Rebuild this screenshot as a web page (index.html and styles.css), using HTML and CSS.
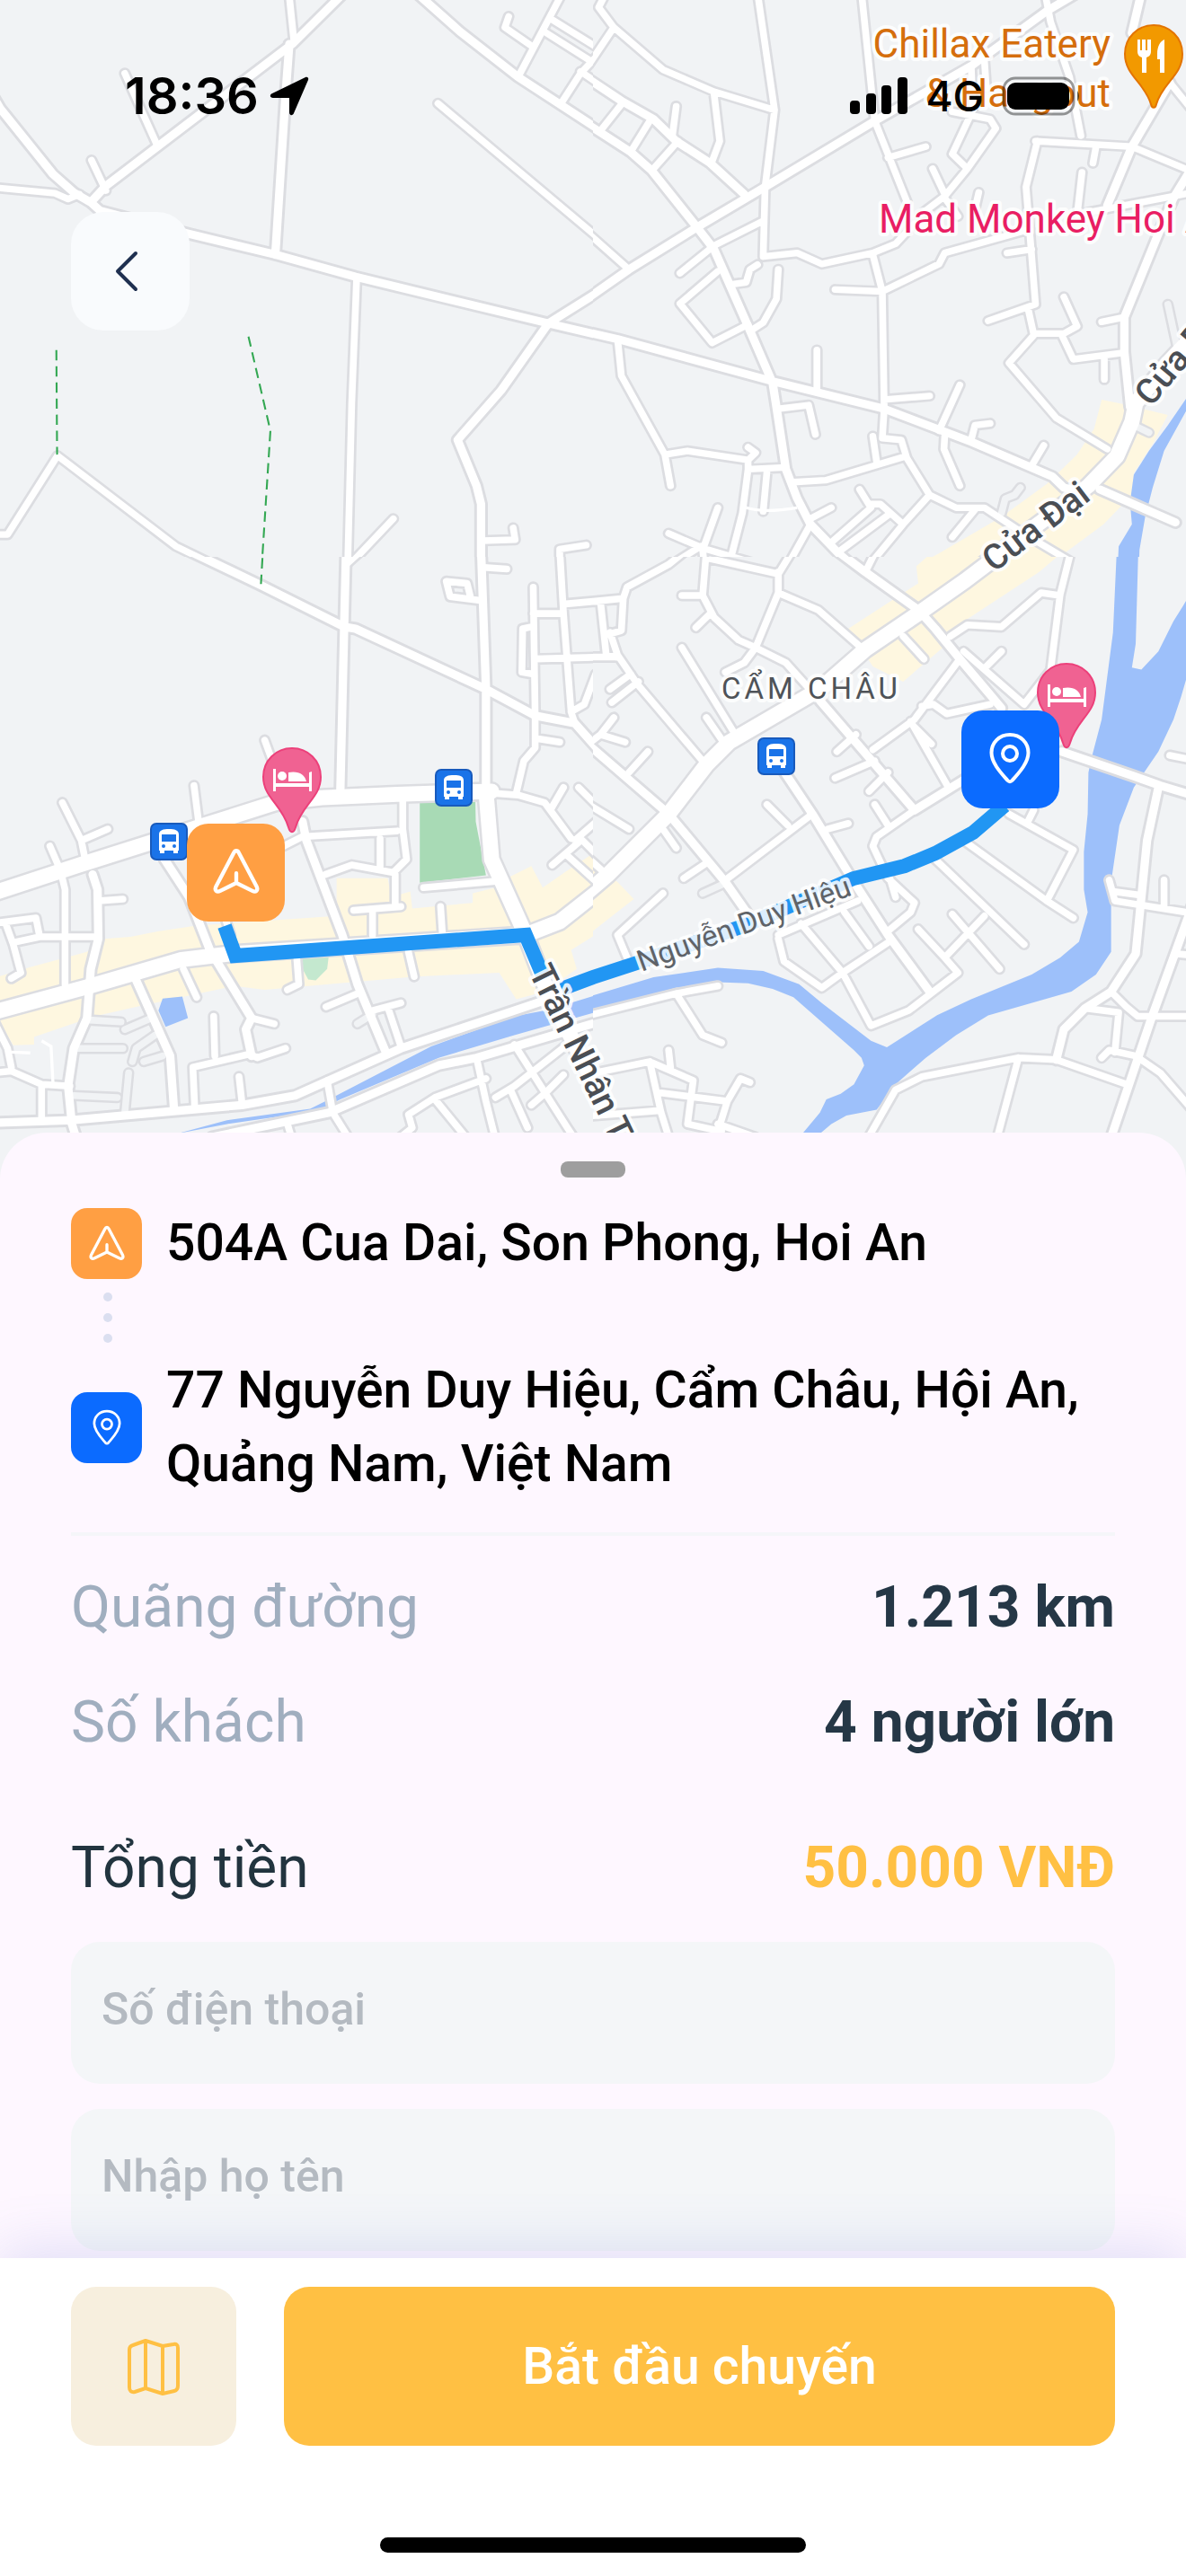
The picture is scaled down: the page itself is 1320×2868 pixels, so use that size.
FILE: index.html
```html
<!DOCTYPE html>
<html lang="vi">
<head>
  <meta charset="UTF-8">
  <meta name="viewport" content="width=device-width, initial-scale=1.0">
  <title>Chuyến đi</title>
  <link rel="stylesheet" href="styles.css">
</head>

<body>
  <!-- Shared icons and road geometry -->
  <svg class="defs" aria-hidden="true">
    <defs>
      <symbol id="icon-arrow" viewBox="0 0 48 48">
        <path class="line" d="M24 3c-1.200 0-2 .8-2.600 2L3 40c-1.600 3.600 1 6 4.500 4.200L24 36l16.500 8.200C44 46 46.600 43.600 45 40L26.600 5C26 3.800 25.200 3 24 3zM24 36V26" />
      </symbol>
      <symbol id="icon-pin" viewBox="0 0 48 58">
        <path class="line" d="M24 3C12 3 3.500 12 3.500 23c0 12 12 24 18 31 1.500 1.600 3.500 1.600 5 0 6-7 18-19 18-31C44.500 12 36 3 24 3z" />
        <circle class="line" cx="24" cy="24" r="8" />
      </symbol>
      <symbol id="bus-stop" viewBox="0 0 42 42">
        <rect x="1" y="1" width="40" height="40" rx="6" fill="#1a73e8" stroke="#185abc" stroke-width="2" />
        <path d="M10 31V13c0-5 5-6 11-6s11 1 11 6v18h-1v3h-5v-3H16v3h-5v-3z" fill="#fff" />
        <path d="M13 13h16v8H13z" fill="#1a73e8" />
        <circle cx="15" cy="26" r="2" fill="#1a73e8" />
        <circle cx="27" cy="26" r="2" fill="#1a73e8" />
      </symbol>
      <symbol id="hotel" viewBox="0 0 68 98">
        <path d="M34 2C16 2 2 16 2 34c0 23 21 31 28 56 2 7 6 7 8 0 7-25 28-33 28-56C66 16 52 2 34 2z" fill="#f06292" stroke="#ec407a" stroke-width="2" />
        <path d="M13 25h3v16h37V29l3-1v22h-3v-5H16v5h-3z" fill="#fff" />
        <path d="M30 39V29c11-2 18 2 20 10z" fill="#fff" />
        <circle cx="23" cy="33" r="5" fill="#fff" />
      </symbol>

      <path id="nw-mid" d="M905 -15L775 118L280 507L240 552M-20 260L0 295L140 475L195 525L240 552L265 575L500 638L730 695L940 755L1450 882L1600 918M1095 -25L1215 85L1370 210L1600 365M765 120L755 260L728 695M1450 882L1325 1065L1210 1200L1260 1325L1272 1375L1272 1600M1450 882L1600 785" />
      <path id="nw-minor" d="M765 -10L777 110M330 200L415 395M242 437L280 520M-10 512L145 527L180 543L210 530M1158 282L1600 665M943 760L930 1100L918 1600M-20 1458L20 1458L152 1243L465 1490L620 1568L700 1605M1040 1415L925 1540M1275 1475L1362 1472L1357 1440M1275 1548L1338 1552M1550 1487L1480 1498L1480 1600M1485 -15L1370 210M1345 45L1335 75L1405 125M1462 55L1600 143M1445 90L1560 165M1590 140L1535 200L1485 280M1535 195L1600 240" />

      <path id="ne-major" d="M1620 880L1520 990L1435 1100L1425 1150L1385 1245L1310 1325L1200 1412L1060 1519L960 1595" />
      <path id="ne-mid" d="M-20 818L95 735L275 620L455 510L745 330L1000 180L1200 30L1290 -25M-20 210L75 275L160 325L220 385L310 445L400 530M-20 335L100 415L155 465L275 620L320 680L410 890L475 1045L485 1110L510 1280L540 1360L575 1430L650 1510L740 1590M-20 905L65 925L475 1040L770 1115L1000 1205L1215 1300L1245 1330L1300 1345M1600 430L1535 540L1490 650L1405 865L1405 960L1420 1110M1340 1335L1540 1425M1450 -20L1425 90M1525 225L1425 400L1360 560" />
      <path id="ne-minor" d="M30 -10L15 20L55 75L185 190L320 250L480 300M55 75L-20 190M435 -20L480 300L455 510L450 700L540 690L605 720L740 690L800 665L850 610M320 255L335 385L315 440M220 290L210 370M75 285L25 350M150 330L105 405M225 385L160 460M710 -20L745 330L830 550M780 430L880 400M1000 310L950 420L990 460L1065 350L1050 325L950 305M990 460L930 535L860 590M898 460L930 530M930 540L965 590M1020 525L1010 570M1195 -20L1210 60L1260 210L1290 370M1000 180L1005 300M1035 165L1040 240M1525 225L1600 320M1170 385L1425 400L1600 475M1175 385L1145 510L1160 700L1170 830L1045 875M1330 400L1322 445M1293 470L1282 570M1280 585L1600 522M1155 625L930 690L915 720L765 795L640 790M740 695L765 795L770 1115L765 1195L815 1200L830 1250L890 1350L960 1385L1035 1385L1130 1450L1260 1530L1250 1590M1160 680L1095 690M1150 840L1165 910L1245 910L1280 890L1245 810M1165 915L1100 990L1225 1140L1360 1225M1240 915L1270 980L1405 962M1352 975L1352 1035M1405 865L1345 878M445 605L320 670L230 745M330 740L230 828L315 935L410 885M370 775L405 770L415 735L435 722M490 735L485 815L450 880L420 900M592 955L592 1060M490 1115L570 1105L588 1185M770 1090L890 1080M970 1050L915 1175M1050 1155L1010 1160L1000 1200M930 1190L928 1225L970 1325M1192 1215L1160 1270M740 1190L750 1260M825 1245L615 1310L530 1315M65 925L75 1025L190 1240L205 1325M190 1240L250 1230L410 1255L430 1235L410 1220M410 1255L410 1280L510 1275M410 1280L395 1400L365 1520M460 1285L450 1395M575 1415L630 1385M575 1430L505 1560M330 1385L290 1500L300 1600M200 1455L290 1495L505 1560M285 1490L130 1590M705 1335L735 1385L630 1480M735 1375L760 1375L820 1430M780 1405L650 1505M890 1350L820 1430L700 1580M1010 1390L950 1465M95 735L-20 630" />
      <path id="ne-alley" d="M1080 1400L1090 1360L1115 1350L1130 1330M1520 830L1545 950M1440 1165L1470 1180" />

      <path id="sw-major" d="M-20 890L210 815L400 755L540 710L730 650L850 637L1050 628L1300 620M-20 1205L240 1135L480 1065L610 1050L1390 1000L1480 965L1600 870M1285 620L1300 800L1390 1000L1440 1130L1600 1450" />
      <path id="sw-mid" d="M1272 -20L1285 350L1285 620M470 -30L690 75L910 185L940 190L1285 350L1415 420L1520 440L1600 530M915 -20L910 185L900 615M-20 1497L190 1490L640 1450L780 1425L1060 1300L1300 1220L1450 1170M560 1535L870 1470L1160 1345L1260 1325L1600 1225M800 700L810 750L905 1000L945 1130L1020 1310M435 800L500 900L555 1040L665 1220L650 1250L665 1320M360 1120L450 1320L460 1460M245 840L258 880L260 1010L240 1090L230 1220L195 1300L180 1400L190 1500L215 1580" />
      <path id="sw-minor" d="M915 20L965 -25M750 765L800 740L1050 725M700 485L720 540M165 650L215 750L225 800M215 750L285 720M132 765L160 830L172 880L172 1130M513 605L525 700M260 910L325 905M-20 970L95 955L105 1005L260 1005M15 970L35 1025L55 1100L30 1115M35 1020L105 1005M665 1220L725 1235M485 1090L520 1165M785 1065L790 1130L760 1145M595 955L610 1000M565 1215L568 1320M755 1300L680 1325L660 1315L510 1350L515 1460M632 1375L640 1445M862 1190L945 1155M985 1200L1060 1180M1025 1190L1060 1295M1065 640L1065 720L1075 800L1040 835L930 815L860 840M1005 745L1005 820M1045 840L1045 925M935 935L1060 925M985 935L985 1000M1165 925L1170 1000M1080 1045L1095 1110M1120 875L1310 858M1300 625L1370 630L1440 650L1510 745L1540 750L1600 810M1490 610L1455 670M1530 610L1600 680M1520 750L1600 680M1530 755L1460 815M1500 790L1600 880M1365 625L1385 540L1415 505L1415 420L1410 80M1415 480L1480 490M1410 310L1380 305L1382 190L1405 185M1410 150L1480 150M1415 270L1600 265M1480 -20L1490 150L1510 410L1520 440M1490 125L1600 115M1510 410L1545 390L1575 310M1340 32L1280 28M1270 115L1190 105L1180 65L1235 70L1245 110M-20 1220L20 1300L30 1350M-20 1365L30 1360L110 1395L185 1400M110 1395L110 1490M1260 1325L1285 1440L1320 1580M1360 1290L1500 1510L1540 1570M1310 1430L1360 1400L1500 1290M1285 1380L1150 1430L1080 1475L1090 1510L1040 1550M1150 1435L1240 1545M1350 1410L1395 1510M1440 1420L1490 1370M1405 1450L1440 1420M865 1385L880 1470L930 1550M760 1500L775 1550" />
      <path id="sw-alley" d="M235 1225L320 1230M205 1300L325 1300M195 1425L310 1430M340 1365L330 1470M330 1250L400 1220M350 1335L360 1300L410 1265M380 1335L430 1320M945 1235L985 1210" />

      <path id="se-major" d="M1100 -25L985 62L860 150L720 245L600 350L360 490L300 550L200 680L40 840L-30 900" />
      <path id="se-mid" d="M640 -20L720 40L860 140L905 190L970 270L1080 400M1240 515L1430 580L1500 605L1600 635M-20 490L200 680L350 860L420 960M500 560L580 680L690 860L780 1000L890 1150M1600 880L1475 1225L1365 1550M1495 610L1465 750L1435 1050L1370 1150L1300 1195L1245 1250L1225 1330M600 380L850 670L980 590" />
      <path id="se-minor" d="M-20 120L80 110L90 80L200 20L250 -20M80 110L75 195L40 205M20 120L35 260L60 265M45 200L65 260L120 340L290 540M-20 265L60 265M120 330L50 385M100 310L45 350M235 102L290 102L300 -20M290 102L320 160L385 220L430 240L510 280L600 380M310 150L272 187M310 5L490 45L530 -20M490 40L490 95L430 240L400 280L350 305M490 95L595 140L715 245M235 240L370 460M300 425L345 490M720 40L750 -20M820 210L875 270M970 270L850 430L740 510M695 470L645 515M745 540L640 585M780 570L730 620M840 435L940 610M850 450L895 495M870 395L900 390L935 415L1050 390M980 250L1140 390L1210 300L1235 100L1260 0L1255 -20M945 210L990 180L1080 185L1185 95L1235 102M1080 250L1035 295M55 425L20 470L85 490M20 470L-20 500M145 515L95 570M-20 650L95 720M-20 790L30 835M185 720L220 770M300 810L240 850M350 855L580 680M460 655L515 710M675 705L620 720M850 670L750 740L740 765L780 850L850 915L840 940L780 990M785 850L800 900M745 655L780 710M185 890L65 1000L90 1060M490 1000L700 910M490 1010L505 1070L605 1140L660 1100L780 1020M550 970L660 1100L735 1240L835 1200L965 1100L930 1060L860 985M665 940L730 1030M930 1060L1035 950M950 945L1075 1090M905 800L1140 1025M980 750L1200 910L1270 955M1100 680L1270 775L1200 910M1150 700L1165 670M1545 1050L1600 1055M1600 945L1380 910L1365 855M1375 885L1450 895M1510 855L1510 930M1370 1150L1410 1190L1440 1215L1600 1215M1310 1195L1390 1205L1380 1310M1345 1325L1365 1305L1435 1320L1500 1365L1600 1480M720 1550L800 1410L870 1375L1125 1325L1225 1330L1410 1395M1125 1325L1065 1550M1525 525L1600 540M-20 1215L220 1155L330 1135M220 1155L290 1265L340 1285M-20 1370L150 1335L265 1385L250 1500L340 1520M200 1305L205 1350M150 1335L180 1470L205 1550M-20 1480L170 1465M180 1418L355 1440L330 1520M355 1440L390 1380L415 1390M330 1500L430 1535" />
      <path id="se-alley" d="M345 865L290 890" />
    </defs>
  </svg>

  <header class="stage">
    <svg class="map" viewBox="0 0 1320 1320" role="img" aria-label="Bản đồ Hội An">
      <!-- North west tile -->
      <svg x="0" y="0" width="660" height="620" viewBox="0 0 1568 1519" preserveAspectRatio="none">
        <use href="#nw-minor" class="casing minor" />
        <use href="#nw-mid" class="casing mid" />
        <use href="#nw-minor" class="road minor" />
        <use href="#nw-mid" class="road mid" />
        <path class="trail" d="M149 955L151 1240M657 918L715 1175L693 1530" />
      </svg>

      <!-- North east tile -->
      <svg x="660" y="0" width="660" height="620" viewBox="0 0 1568 1519" preserveAspectRatio="none">
        <path class="shops" d="M1345 1090L1400 1102L1520 1132L1480 1210L1430 1290L1425 1350L1350 1430L1180 1560L850 1560L860 1540L910 1512L1080 1410L1200 1320L1280 1240L1325 1170z" />
        <path class="water" d="M1590 1055L1520 1160L1470 1230L1430 1295L1420 1370L1425 1430L1390 1490L1385 1600L1442 1600L1445 1500L1460 1410L1480 1330L1510 1230L1590 1080z" />
        <use href="#ne-alley" class="casing alley" />
        <use href="#ne-minor" class="casing minor" />
        <use href="#ne-mid" class="casing mid" />
        <use href="#ne-major" class="casing major" />
        <use href="#ne-alley" class="ground alley" />
        <use href="#ne-minor" class="road minor" />
        <use href="#ne-mid" class="road mid" />
        <use href="#ne-major" class="road major" />
        <path class="footway" d="M405 1385Q450 1400 540 1385" />
      </svg>

      <!-- South west tile -->
      <svg x="0" y="620" width="660" height="660" viewBox="0 0 1568 1568" preserveAspectRatio="none">
        <path class="shops" d="M-20 1115L80 1085L230 1045L275 1010L345 1005L420 990L520 975L890 950L890 850L1025 850L1035 900L1085 885L1090 930L1250 915L1250 890L1310 875L1350 845L1405 818L1435 875L1500 830L1590 770L1590 990L1510 1040L1525 1090L1440 1150L1365 1170L1320 1100L1100 1110L700 1145L620 1135L360 1190L250 1215L90 1270L90 1290L35 1292L-20 1200z" />
        <path class="park" d="M1110 650L1257 648L1258 700L1285 842L1110 862z" />
        <path class="garden" d="M797 1050L870 1050L865 1090L835 1120L815 1118L800 1090z" />
        <path class="water" d="M430 1168L482 1163L497 1220L438 1243L419 1200zM470 1525L600 1490L820 1460L870 1435L1140 1295L1360 1215L1450 1198L1590 1155L1590 1200L1360 1265L1160 1325L900 1435L840 1465L600 1500z" />
        <use href="#sw-alley" class="casing alley" />
        <use href="#sw-minor" class="casing minor" />
        <use href="#sw-mid" class="casing mid" />
        <use href="#sw-major" class="casing major" />
        <use href="#sw-alley" class="ground alley" />
        <use href="#sw-minor" class="road minor" />
        <use href="#sw-mid" class="road mid" />
        <use href="#sw-major" class="road major" />
        <path class="footway" d="M110 1280L135 1295L140 1390M30 1310L80 1312" />
        <path class="trail" d="M694 3L690 72" />
      </svg>

      <!-- South east tile -->
      <svg x="660" y="620" width="660" height="660" viewBox="0 0 1568 1568" preserveAspectRatio="none">
        <path class="shops" d="M855 25L905 -20L1250 -20L1180 40L940 197L925 240L820 330L740 290L675 190L860 70zM-20 830L10 825L65 860L108 905L-20 1005z" />
        <path class="water" d="M1385 -20L1375 200L1345 430L1320 525L1310 570L1308 680L1298 780L1298 880L1308 940L1285 1018L1235 1060L1160 1105L1000 1170L910 1212L777 1297L735 1280L605 1180L545 1130L450 1095L330 1087L160 1112L0 1160L-20 1165L-20 1205L0 1200L220 1140L330 1125L410 1128L475 1143L530 1165L690 1305L710 1325L717 1345L690 1395L655 1420L617 1435L600 1470L550 1530L595 1530L630 1500L670 1478L750 1462L800 1395L880 1325L960 1265L1045 1213L1265 1150L1330 1105L1370 1045L1370 860L1392 710L1430 610L1495 515L1535 430L1555 370L1590 250L1590 80L1560 130L1535 170L1495 250L1450 298L1425 293L1435 230L1442 -20z" />
        <use href="#se-alley" class="casing alley" />
        <use href="#se-minor" class="casing minor" />
        <use href="#se-mid" class="casing mid" />
        <use href="#se-major" class="casing major" />
        <use href="#se-alley" class="ground alley" />
        <use href="#se-minor" class="road minor" />
        <use href="#se-mid" class="road mid" />
        <use href="#se-major" class="road major" />
      </svg>

      <!-- Trip route -->
      <path class="route" d="M250 1031L262 1064L585 1041L605 1088M625 1101L660 1088L706 1073L830 1030L950 978L1007 964L1041 950L1083 927L1118 897" />

      <!-- Place names -->
      <text class="place street" transform="translate(1106 638) rotate(-37)">Cửa Đại</text>
      <text class="place street" transform="translate(1281 454) rotate(-50)">Cửa Đại</text>
      <text class="place street" transform="translate(588 1082) rotate(64)">Trần Nhân Tông</text>
      <text class="place lane" transform="translate(714 1082) rotate(-20)">Nguyễn Duy Hiệu</text>
      <text class="place ward" x="803" y="778">CẨM CHÂU</text>
      <text class="place food" x="1236" y="64">Chillax Eatery</text>
      <text class="place food" x="1236" y="119">&amp; Hangout</text>
      <text class="place stay" x="978" y="259">Mad Monkey Hoi An</text>

      <!-- Points of interest -->
      <path d="M1284 28c-18 0-32 14-32 32 0 24 22 32 29 56 1 5 5 5 6 0 7-24 29-32 29-56 0-18-14-32-32-32z" fill="#f29900" stroke="#e37400" stroke-width="2" />
      <path d="M1266 44h3v12h2V44h4v12h2V44h4v13c0 4-2 6-5 7v17h-5V64c-3-1-5-3-5-7zM1296 44c-5 2-8 8-8 16v6h3v15h5z" fill="#fff" />
      <use href="#hotel" x="291" y="831" width="68" height="98" />
      <use href="#hotel" x="1153" y="737" width="68" height="98" />
      <use href="#bus-stop" x="167" y="916" width="42" height="42" />
      <use href="#bus-stop" x="484" y="856" width="42" height="42" />
      <use href="#bus-stop" x="843" y="821" width="42" height="42" />

      <!-- Start and end markers -->
      <rect x="208" y="917" width="109" height="109" rx="24" fill="#ff9f43" />
      <use href="#icon-arrow" x="237" y="944" width="52" height="52" />
      <rect x="1070" y="791" width="109" height="109" rx="24" fill="#0b6bff" />
      <use href="#icon-pin" x="1100" y="815" width="48" height="58" />
    </svg>

    <div class="overlay">
      <div class="status-bar">
        <div class="status-group">
          <span class="clock">18:36</span>
          <svg class="gps" viewBox="0 0 44 44" aria-hidden="true">
            <path d="M40 1c2-1 4 1 3 3L27 41c-1 3-5 3-5-1V24H4c-4 0-4-4-1-5z" />
          </svg>
        </div>
        <div class="status-group">
          <svg class="signal" viewBox="0 0 64 42" aria-hidden="true">
            <rect x="0" y="26" width="11" height="15" rx="4" />
            <rect x="18" y="18" width="11" height="23" rx="4" />
            <rect x="35" y="9" width="11" height="32" rx="4" />
            <rect x="53" y="0" width="11" height="41" rx="4" />
          </svg>
          <span class="network">4G</span>
          <svg class="battery" viewBox="0 0 88 44" aria-hidden="true">
            <rect x="2" y="2" width="78" height="40" rx="13" fill="none" stroke="#000" stroke-opacity=".4" stroke-width="3" />
            <rect x="6" y="7" width="69" height="30" rx="9" />
            <path d="M84 16q4 6 0 12z" fill-opacity=".6" />
          </svg>
        </div>
      </div>
      <button class="back" type="button" aria-label="Quay lại">
        <svg viewBox="0 0 26 46" aria-hidden="true"><path d="M23 3L3 23l20 20" /></svg>
      </button>
    </div>
  </header>

  <main class="sheet">
    <div class="handle"></div>

    <!-- Pickup and drop-off -->
    <div class="stops">
      <div class="stop">
        <span class="stop-icon pickup"><svg aria-hidden="true"><use href="#icon-arrow" /></svg></span>
        <p>504A Cua Dai, Son Phong, Hoi An</p>
      </div>
      <div class="dots"><i></i><i></i><i></i></div>
      <div class="stop">
        <span class="stop-icon dropoff"><svg aria-hidden="true"><use href="#icon-pin" /></svg></span>
        <p>77 Nguyễn Duy Hiệu, Cẩm Châu, Hội An, Quảng Nam, Việt Nam</p>
      </div>
    </div>

    <!-- Trip summary -->
    <dl class="summary">
      <div class="row">
        <dt>Quãng đường</dt>
        <dd>1.213 km</dd>
      </div>
      <div class="row">
        <dt>Số khách</dt>
        <dd>4 người lớn</dd>
      </div>
      <div class="row total">
        <dt>Tổng tiền</dt>
        <dd>50.000 VNĐ</dd>
      </div>
    </dl>

    <form class="contact" id="tripForm">
      <input type="tel" name="phone" placeholder="Số điện thoại" aria-label="Số điện thoại">
      <input type="text" name="name" placeholder="Nhập họ tên" aria-label="Nhập họ tên">
    </form>
  </main>

  <footer class="actions">
    <div class="buttons">
      <button class="map-button" type="button" aria-label="Bản đồ">
        <svg viewBox="0 0 60 64" aria-hidden="true">
          <path d="M3 13q0-4 4-5L21 3l19 6 12-2q5-1 5 4v42q0 5-4 6l-13 3-19-6-12 4q-6 1-6-5zM21 3v53M40 9v53" />
        </svg>
      </button>
      <button class="start-button" type="submit" form="tripForm">Bắt đầu chuyến</button>
    </div>
    <div class="home-indicator"></div>
  </footer>
</body>
</html>
```
FILE: styles.css
```css
* {
  box-sizing: border-box;
}

body {
  font-family: Roboto, 'Noto Sans', sans-serif;
  margin: 0;
  min-height: 100vh;
  display: flex;
  flex-direction: column;
  background-color: #fef7ff;
}

button,
input {
  font-family: inherit;
  border: none;
}

.defs {
  position: absolute;
  width: 0;
  height: 0;
}

.line {
  fill: none;
  stroke: white;
  stroke-width: 4;
  stroke-linecap: round;
  stroke-linejoin: round;
}

/* Map */
.stage {
  display: grid;
  background-color: #f1f3f5;
}

.stage > * {
  grid-area: 1 / 1;
}

.map {
  display: block;
  width: 100%;
}

.casing,
.road,
.ground {
  fill: none;
  stroke-linecap: round;
  stroke-linejoin: round;
}

.casing {
  stroke: #dcdde1;
}

.road {
  stroke: white;
}

.ground {
  stroke: #f1f3f5;
}

.casing.minor {
  stroke-width: 31;
}

.casing.mid {
  stroke-width: 36;
}

.casing.major {
  stroke-width: 52;
}

.casing.alley {
  stroke-width: 30;
}

.road.minor {
  stroke-width: 18;
}

.road.mid {
  stroke-width: 22;
}

.road.major {
  stroke-width: 40;
}

.ground.alley {
  stroke-width: 18;
}

.footway {
  fill: none;
  stroke: white;
  stroke-width: 8;
}

.trail {
  fill: none;
  stroke: #34a853;
  stroke-width: 5;
  stroke-dasharray: 28 16;
}

.shops {
  fill: #fef7e0;
}

.park {
  fill: #a8dab5;
}

.garden {
  fill: #c4e8cf;
}

.water {
  fill: #9dc0fa;
}

.route {
  fill: none;
  stroke: #2196f3;
  stroke-width: 16;
}

.place {
  paint-order: stroke;
  stroke: rgba(255, 255, 255, 0.85);
  stroke-width: 8px;
  stroke-linejoin: round;
}

.street {
  font-size: 39px;
  font-weight: 500;
  fill: #4a4e54;
}

.lane {
  font-size: 33px;
  fill: #5f6368;
}

.ward {
  font-size: 33px;
  letter-spacing: 4px;
  fill: #4f5358;
}

.food {
  font-size: 44px;
  text-anchor: end;
  fill: #d56e0c;
}

.stay {
  font-size: 44px;
  fill: #e91e63;
}

/* Status bar and back button */
.overlay {
  padding: 78px 117px 0 79px;
}

.status-bar {
  display: flex;
  justify-content: space-between;
  align-items: center;
  height: 58px;
  padding-left: 60px;
  font-family: Inter, sans-serif;
}

.status-group {
  display: flex;
  align-items: center;
}

.clock {
  font-size: 56px;
  font-weight: 600;
}

.gps {
  width: 44px;
  height: 44px;
  margin-left: 12px;
}

.signal {
  width: 64px;
  height: 42px;
}

.network {
  font-size: 46px;
  font-weight: 500;
  margin: 0 20px;
}

.battery {
  width: 88px;
  height: 44px;
}

.back {
  width: 132px;
  height: 132px;
  margin-top: 100px;
  padding: 0;
  display: flex;
  justify-content: center;
  align-items: center;
  border-radius: 36px;
  background-color: #f9fbfd;
  cursor: pointer;
}

.back svg {
  width: 26px;
  height: 46px;
  margin-right: 8px;
  fill: none;
  stroke: #1f3050;
  stroke-width: 4;
  stroke-linecap: round;
  stroke-linejoin: round;
}

/* Bottom sheet */
.sheet {
  flex: 1;
  margin-top: -59px;
  padding: 32px 79px 6px;
  border-radius: 52px 52px 0 0;
  background-color: #fef7ff;
}

.handle {
  width: 72px;
  height: 18px;
  margin: 0 auto;
  border-radius: 8px;
  background-color: #9e9e9e;
}

.stops {
  padding: 32px 0 35px;
  border-bottom: 4px solid #f5f6f9;
}

.stop {
  display: flex;
  align-items: center;
  gap: 27px;
}

.stop p {
  margin: 0;
  font-size: 57px;
  font-weight: 500;
  line-height: 82px;
  color: black;
}

.stop-icon {
  flex: none;
  display: flex;
  justify-content: center;
  align-items: center;
  width: 79px;
  height: 79px;
  border-radius: 18px;
}

.stop-icon svg {
  width: 40px;
  height: 40px;
}

.pickup {
  background-color: #ff9f43;
}

.dropoff {
  background-color: #0b6bff;
}

.dots {
  display: flex;
  flex-direction: column;
  gap: 13px;
  height: 82px;
  padding: 14px 0 0 36px;
}

.dots i {
  width: 10px;
  height: 10px;
  border-radius: 50%;
  background-color: #dbdff0;
}

.summary {
  margin: 0;
  padding: 16px 0 18px;
}

.row {
  display: flex;
  justify-content: space-between;
  font-size: 64px;
  line-height: 128px;
}

.row dt {
  color: #a0aebf;
}

.row dd {
  margin: 0;
  font-weight: 700;
  color: #253746;
}

.total {
  margin-top: 34px;
}

.total dt {
  color: #22343f;
}

.total dd {
  color: #ffc043;
}

.contact {
  display: flex;
  flex-direction: column;
  gap: 28px;
}

.contact input {
  width: 100%;
  height: 158px;
  padding: 0 34px 8px;
  border-radius: 32px;
  background-color: #f4f6f8;
  color: #253746;
  font-size: 50px;
  font-weight: 500;
}

.contact input::placeholder {
  color: #b4bac1;
  opacity: 1;
}

/* Action bar */
.actions {
  position: sticky;
  bottom: 0;
  padding: 32px 79px 26px;
  background-color: white;
  box-shadow: 0 -8px 60px rgba(100, 120, 210, 0.2);
}

.buttons {
  display: flex;
  gap: 53px;
  margin-bottom: 102px;
}

.buttons button {
  height: 177px;
  padding: 0;
  border-radius: 28px;
  cursor: pointer;
}

.map-button {
  width: 184px;
  display: flex;
  justify-content: center;
  align-items: center;
  background-color: #f7efde;
}

.map-button svg {
  width: 60px;
  height: 64px;
  fill: none;
  stroke: #ffc043;
  stroke-width: 4;
  stroke-linejoin: round;
}

.start-button {
  flex: 1;
  background-color: #ffc043;
  color: white;
  font-size: 57px;
  font-weight: 500;
}

.home-indicator {
  width: 474px;
  height: 17px;
  margin: 0 auto;
  border-radius: 9px;
  background-color: black;
}
```
